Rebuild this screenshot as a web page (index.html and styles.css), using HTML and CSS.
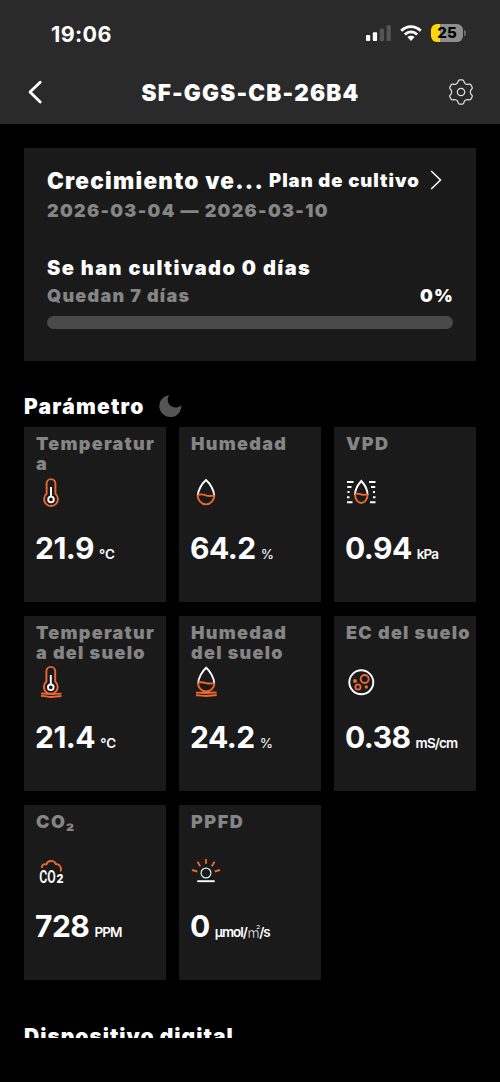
FILE: index.html
```html
<!DOCTYPE html>
<html lang="es">
<head>
<meta charset="utf-8">
<title>SF-GGS-CB-26B4</title>
<link rel="stylesheet" href="styles.css">
</head>
<body>
<div class="screen">
  <header class="header">
    <div class="status">
      <span class="clock">19:06</span>
      <div class="status-icons">
        <svg class="signal" viewBox="0 0 26 18"><g fill="#fff"><rect x="1" y="11" width="4.2" height="6" rx="1"/><rect x="7.8" y="8.2" width="4.3" height="8.8" rx="1"/></g><g fill="#555"><rect x="14.7" y="4.6" width="4.3" height="12.4" rx="1"/><rect x="21.6" y="1.2" width="4.2" height="15.8" rx="1"/></g></svg>
        <svg class="wifi" viewBox="0 0 22 18"><g fill="none" stroke="#fff" stroke-width="2.7"><path d="M1.2 6.8C6.8 1.2 15.2 1.2 20.8 6.8"/><path d="M4.9 10.5C8.4 7 13.6 7 17.1 10.5"/></g><path fill="#fff" d="M7.4 13.1c2-1.9 5.2-1.9 7.2 0L11 17z"/></svg>
        <div class="battery"><span class="battery-text">25</span></div>
      </div>
    </div>
    <div class="navbar">
      <svg class="back" viewBox="0 0 16 24"><path d="M13.2 2.2 3 12 13.2 22" fill="none" stroke="#fff" stroke-width="2.8" stroke-linecap="round" stroke-linejoin="round"/></svg>
      <h1 class="title">SF-GGS-CB-26B4</h1>
      <svg class="gear" viewBox="-13 -13 26 26" fill="none" stroke="#e4e4e4" stroke-width="1.2">
        <defs><path id="tooth" d="M-4.650-8.050C-3.350-8.800-3-9.600-2.800-10.800Q-2.500-12.100-1.300-12.100H1.300Q2.500-12.100 2.800-10.800C3-9.600 3.350-8.800 4.650-8.050"/></defs>
        <circle r="3.700"/>
        <use href="#tooth"/><use href="#tooth" transform="rotate(60)"/><use href="#tooth" transform="rotate(120)"/><use href="#tooth" transform="rotate(180)"/><use href="#tooth" transform="rotate(240)"/><use href="#tooth" transform="rotate(300)"/>
      </svg>
    </div>
  </header>

  <main class="content">
    <section class="plan">
      <div class="plan-head">
        <span class="stage">Crecimiento ve...</span>
        <span class="plan-link">Plan de cultivo</span>
        <svg class="chevron" viewBox="0 0 12 20"><path d="M1.200 1 10.500 10 1.200 19" fill="none" stroke="#fff" stroke-width="1.5"/></svg>
      </div>
      <div class="dates">2026-03-04 — 2026-03-10</div>
      <div class="grown">Se han cultivado 0 días</div>
      <div class="remaining"><span class="left">Quedan 7 días</span><span class="percent">0%</span></div>
      <div class="progress"></div>
    </section>

    <div class="section-head">
      <h2 class="heading">Parámetro</h2>
      <svg class="moon" viewBox="0 0 24 24"><path d="M10 1.200A8 8 0 0 0 22.300 11.300 11 11 0 1 1 10 1.200z" fill="#555"/></svg>
    </div>

    <section class="grid">
      <article class="tile">
        <h3 class="name">Temperatura</h3>
        <svg class="icon" viewBox="0 0 30 30"><path class="o" d="M10.600 15.800V5.500a4.400 4.400 0 0 1 8.800 0v10.300a6.900 6.900 0 1 1-8.800 0z"/><path class="w" d="M15 9v9.500"/><circle class="w" cx="15" cy="21.400" r="2.800"/></svg>
        <p class="reading"><b>21.9</b><span class="unit">℃</span></p>
      </article>
      <article class="tile">
        <h3 class="name">Humedad</h3>
        <svg class="icon" viewBox="0 0 30 30"><path class="w" d="M6.800 17.500C7 12 11 5.500 15 2c4 3.500 8 10 8.200 15.500"/><path class="o" d="M6.600 17a8.400 9.400 0 1 0 16.800 0M6.800 16.800c3-1 5.200-.5 8 .5s5 1 8.400 0"/></svg>
        <p class="reading"><b>64.2</b><span class="unit light">%</span></p>
      </article>
      <article class="tile">
        <h3 class="name wide">VPD</h3>
        <svg class="icon" viewBox="0 0 30 30"><path class="w" d="M9 17C9 11.500 12 6.500 15.300 3c3.300 3.500 6.300 8.500 6.300 14"/><path class="o" d="M9 16.500a6.300 8.500 0 1 0 12.600 0M9 16c2.500-1 4-.2 6.300.5s4 .5 6.300-.300"/><path class="w" d="M1 4h6.500M1.300 9h4.200M1.500 14h2M1 19.300h2.500M1 24.300h5.500M23 4h6.500M25 9h4.200M27 14h2M27 19.300h2.500M24 24.300h5.500"/></svg>
        <p class="reading"><b>0.94</b><span class="unit">kPa</span></p>
      </article>
      <article class="tile">
        <h3 class="name">Temperatura del suelo</h3>
        <svg class="icon" viewBox="0 0 30 30"><path class="o" d="M10.400 14.600V4.300a4.400 4.400 0 0 1 8.800 0v10.300a6.900 6.900 0 1 1-8.800 0z"/><path class="w" d="M14.800 8v9.500"/><circle class="w" cx="14.800" cy="20.300" r="2.800"/><path class="o" d="M5 26.600c4-.5 6 .5 10 .5s6-.5 10.500-.5M5 29c4-.5 6 1 10 1s6-.8 10.500-1"/></svg>
        <p class="reading"><b>21.4</b><span class="unit">℃</span></p>
      </article>
      <article class="tile">
        <h3 class="name">Humedad del suelo</h3>
        <svg class="icon" viewBox="0 0 30 30"><path class="w" d="M7.200 16.500C7.200 11 11.200 4.200 15.200.8c4 3.400 8 10.200 8 15.700"/><path class="o" d="M7 16c0 5 4 8.500 8.200 8.500s8.200-3.500 8.200-8.500M7.200 15.600c3-.8 5.200-.3 8 .5s5 .6 8 0M5 25.800c4-.6 6 .4 10 .2s6-.6 10.700-.4M5 28.300c4-.5 6 .7 10 .7s6-.8 10.700-1"/></svg>
        <p class="reading"><b>24.2</b><span class="unit light">%</span></p>
      </article>
      <article class="tile">
        <h3 class="name">EC del suelo</h3>
        <svg class="icon" viewBox="0 0 30 30"><circle class="w" cx="15.300" cy="15.300" r="12"/><circle class="o" cx="18.700" cy="12" r="4"/><circle class="o" cx="12" cy="20" r="2.600"/><circle class="of" cx="9" cy="14" r="2"/><circle class="of" cx="20.300" cy="20" r="1.700"/></svg>
        <p class="reading"><b>0.38</b><span class="unit">mS/cm</span></p>
      </article>
      <article class="tile">
        <h3 class="name wide">CO₂</h3>
        <svg class="icon" viewBox="0 0 30 30"><path class="o" d="M5.800 12C5.500 9 8 7.500 10.300 8.400 11.500 4.200 18 3.500 19.700 8c3.500-.5 6.500 3.500 4.800 7.500"/><text class="co" x="3.200" y="26.900" textLength="16.500" lengthAdjust="spacingAndGlyphs">CO<tspan class="two"></tspan></text><text class="co two" x="20.600" y="26.900" textLength="7" lengthAdjust="spacingAndGlyphs">2</text></svg>
        <p class="reading"><b>728</b><span class="unit">PPM</span></p>
      </article>
      <article class="tile">
        <h3 class="name wide">PPFD</h3>
        <svg class="icon" viewBox="0 0 30 30"><circle cx="15" cy="17" r="4.900" fill="none" stroke="#d9f3ee" stroke-width="1.200"/><path class="w" d="M6.300 25.200h17.400"/><path class="o" d="M15 3v4.700M6.500 5.700l2.700 4.500M23.500 5.700l-2.700 4.500M1 14l5.300 1.500M29 14l-5.300 1.500"/></svg>
        <p class="reading"><b>0</b><span class="unit mol">µmol/<span class="sq">㎡</span>/s</span></p>
      </article>
    </section>

    <div class="next"><h2 class="heading">Dispositivo digital</h2></div>
  </main>
</div>
</body>
</html>
```
FILE: styles.css
```css
* { box-sizing: border-box; margin: 0; padding: 0; }
body { background: #000; color: #fff; font-family: Inter, "Noto Sans CJK SC", sans-serif; }
.screen { width: 500px; height: 1082px; overflow: hidden; background: #000; }
svg { display: block; flex: none; overflow: visible; }
.header { height: 124px; background: #2a2a2a; padding-top: 20px; }
.status { height: 26px; padding: 0 34px 0 51px; display: flex; align-items: center; justify-content: space-between; }
.clock { padding-top: 1px; font-size: 21.500px; font-weight: 750; line-height: 26px; letter-spacing: 0.4px; }
.status-icons { display: flex; align-items: center; }
.signal { width: 26px; height: 18px; margin-right: 9px; }
.wifi { width: 22px; height: 18px; margin-right: 9px; }
.battery { position: relative; width: 32px; height: 18px; margin-right: 3px; border-radius: 6px; background: linear-gradient(90deg, #ffd60a 9px, #8e8e8e 9px); display: flex; justify-content: center; align-items: center; }
.battery::after { content: ""; position: absolute; right: -3px; top: 6px; width: 2px; height: 6px; border-radius: 0 2px 2px 0; background: #6c6c6c; }
.battery-text { color: #000; font-size: 15px; font-weight: 800; line-height: 18px; }
.navbar { margin-top: 32px; height: 28px; padding: 0 26px 0 27px; display: flex; align-items: center; justify-content: space-between; }
.back { width: 16px; height: 24px; }
.gear { width: 26px; height: 26px; }
.title { padding-left: 10px; padding-top: 2px; font-size: 22.500px; font-weight: 900; line-height: 28px; letter-spacing: 1.2px; white-space: nowrap; }
.content { padding: 24px 24px 0; }
.plan { height: 213px; background: #1a1a1a; padding: 18px 23px 0; }
.plan-head { height: 28px; display: flex; align-items: center; white-space: nowrap; }
.stage { width: 222px; font-size: 22.500px; font-weight: 900; letter-spacing: 1.25px; }
.plan-link { width: 161px; font-size: 18.500px; font-weight: 900; letter-spacing: 1px; }
.chevron { width: 12px; height: 20px; }
.dates { margin-top: 5px; font-size: 18px; line-height: 24px; font-weight: 900; letter-spacing: 1.3px; color: #858585; white-space: nowrap; }
.grown { margin-top: 32px; font-size: 20px; line-height: 26px; font-weight: 900; letter-spacing: 1.45px; }
.remaining { margin-top: 3px; height: 24px; display: flex; justify-content: space-between; font-size: 18px; line-height: 24px; font-weight: 900; letter-spacing: 1.25px; }
.percent { margin-right: -1px; }
.left { color: #858585; }
.progress { margin-top: 8px; height: 13px; border-radius: 7px; background: #4a4a4a; }
.section-head { margin-top: 31px; height: 28px; display: flex; align-items: center; gap: 14px; }
.heading { padding-top: 1px; font-size: 21px; line-height: 28px; font-weight: 900; letter-spacing: 1.25px; white-space: nowrap; }
.moon { width: 24px; height: 24px; }
.grid { margin-top: 7px; display: grid; grid-template-columns: repeat(3, 142px); grid-auto-rows: 175px; gap: 14px 13px; }
.tile { background: #1a1a1a; padding: 7px 0 0 12px; }
.name { width: 127px; height: 44px; color: #858585; font-size: 18px; line-height: 19.500px; font-weight: 900; letter-spacing: 1.3px; overflow-wrap: anywhere; }
.wide { letter-spacing: 1.5px; }
.icon { width: 30px; height: 30px; }
.o { fill: none; stroke: #ed6731; stroke-width: 1.900; }
.of { fill: #ed6731; }
.w { fill: none; stroke: #fff; stroke-width: 1.900; }
.co { fill: #fff; font-family: Roboto, sans-serif; font-size: 17.500px; font-weight: 600; }
.two { font-size: 12px; font-weight: 900; }
.reading { margin-top: 22px; margin-left: -1px; height: 36px; line-height: 36px; display: flex; align-items: baseline; gap: 5px; white-space: nowrap; }
.reading b { font-size: 30px; font-weight: 650; letter-spacing: -0.500px; }
.unit { font-size: 13.500px; font-weight: 600; letter-spacing: -0.850px; }
.mol { letter-spacing: -1.050px; }
.light { font-weight: 400; }
.sq { font-weight: 300; }
.next { margin-top: 43px; height: 15px; overflow: hidden; }
.next .heading { letter-spacing: 1px; padding-top: 0; }
```
